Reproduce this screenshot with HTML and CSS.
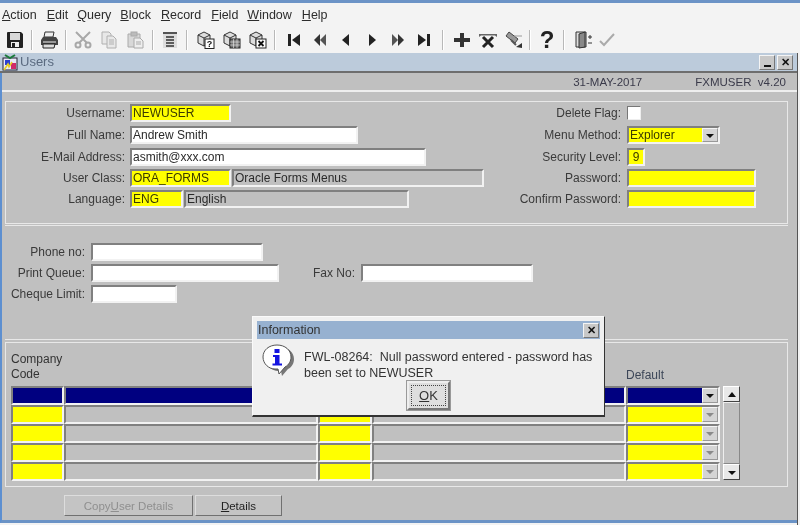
FILE: index.html
```html
<!DOCTYPE html>
<html lang="en">
<head>
<meta charset="utf-8">
<title>Users</title>
<link rel="stylesheet" href="styles.css">
</head>
<body>
<div class="app">
  <nav class="menubar">
    <span class="m m1"><u>A</u>ction</span><span class="m m2"><u>E</u>dit</span><span class="m m3"><u>Q</u>uery</span><span class="m m4"><u>B</u>lock</span><span class="m m5"><u>R</u>ecord</span><span class="m m6"><u>F</u>ield</span><span class="m m7"><u>W</u>indow</span><span class="m m8"><u>H</u>elp</span>
  </nav>
  <div class="toolbar">
    <span class="tb"><svg width="18" height="18" viewBox="0 0 18 18"><path d="M2 1h13l2 2v13a1 1 0 0 1-1 1H2a1 1 0 0 1-1-1V2a1 1 0 0 1 1-1z" fill="#222"/><rect x="4" y="2" width="10" height="7" fill="#d8d8d8"/><rect x="5" y="11" width="8" height="5" fill="#eee"/><rect x="6" y="12" width="3" height="4" fill="#222"/></svg></span>
    <i class="sep"></i>
    <span class="tb"><svg width="18" height="18" viewBox="0 0 18 18"><path d="M5 1h9l-1 5H4z" fill="#eee" stroke="#333"/><path d="M3 6h13l2 3v5H1V9z" fill="#444"/><rect x="3" y="10" width="13" height="2" fill="#999"/><path d="M3 13h12l-1 4H3z" fill="#ddd" stroke="#222"/></svg></span>
    <i class="sep"></i>
    <span class="tb"><svg width="18" height="18" viewBox="0 0 18 18" fill="none" stroke="#a8a8a8" stroke-width="2"><path d="M2 1l11 11M16 1L5 12"/><circle cx="4" cy="14" r="2.5"/><circle cx="14" cy="14" r="2.5"/></svg></span>
    <span class="tb"><svg width="18" height="18" viewBox="0 0 18 18" fill="#e8e8e8" stroke="#b0b0b0"><path d="M2 1h7l2 2v10H2z"/><path d="M7 5h6l3 3v9H7z"/><path d="M9 9h5M9 11h5M9 13h5" fill="none"/></svg></span>
    <span class="tb"><svg width="18" height="18" viewBox="0 0 18 18" fill="#d8d8d8" stroke="#aaa"><path d="M2 3h12v13H2z"/><rect x="5" y="1" width="6" height="4" fill="#bbb"/><path d="M8 7h6l3 3v7H8z" fill="#eee"/><path d="M10 11h5M10 13h5" fill="none"/></svg></span>
    <i class="sep s4"></i>
    <span class="tb"><svg width="18" height="18" viewBox="0 0 18 18"><rect x="2" y="1" width="14" height="16" fill="#ddd"/><rect x="2" y="1" width="14" height="2" fill="#555"/><path d="M5 6h8M5 9h8M5 12h8M5 15h8" stroke="#333" stroke-width="1.4"/></svg></span>
    <i class="sep"></i>
    <span class="tb g1"><svg width="18" height="18" viewBox="0 0 18 18"><path d="M1 4l6-3 6 3v8l-6 3-6-3z" fill="#ddd" stroke="#333"/><path d="M1 4l6 3 6-3M7 7v8" fill="none" stroke="#333"/><rect x="8" y="8" width="9" height="9.500" fill="#fff" stroke="#222"/><text x="12.500" y="16" class="gl">?</text></svg></span>
    <span class="tb"><svg width="18" height="18" viewBox="0 0 18 18"><path d="M1 4l6-3 6 3v8l-6 3-6-3z" fill="#ddd" stroke="#333"/><path d="M1 4l6 3 6-3M7 7v8" fill="none" stroke="#333"/><rect x="7" y="8" width="10" height="9" fill="#777" stroke="#222"/><path d="M7 11h10M7 14h10M10.500 8v9M14 8v9" stroke="#eee" stroke-width=".6"/></svg></span>
    <span class="tb"><svg width="18" height="18" viewBox="0 0 18 18"><path d="M1 4l6-3 6 3v8l-6 3-6-3z" fill="#ddd" stroke="#333"/><path d="M1 4l6 3 6-3M7 7v8" fill="none" stroke="#333"/><rect x="7" y="8" width="10" height="9" fill="#fff" stroke="#222"/><path d="M9.500 10l5 5M14.500 10l-5 5" stroke="#111" stroke-width="1.800"/></svg></span>
    <i class="sep"></i>
    <span class="tb g2"><svg width="14" height="14" viewBox="0 0 14 14" fill="#222"><rect x="1" y="1" width="3" height="12"/><path d="M13 1v12L5 7z"/></svg></span>
    <span class="tb"><svg width="14" height="14" viewBox="0 0 14 14" fill="#333"><path d="M7 1v12L1 7z"/><path d="M13 1v12L7 7z" fill="#555"/></svg></span>
    <span class="tb"><svg width="14" height="14" viewBox="0 0 14 14" fill="#222"><path d="M10 1v12L3 7z"/></svg></span>
    <span class="tb"><svg width="14" height="14" viewBox="0 0 14 14" fill="#222"><path d="M4 1v12l7-6z"/></svg></span>
    <span class="tb"><svg width="14" height="14" viewBox="0 0 14 14" fill="#333"><path d="M1 1v12l6-6z" fill="#555"/><path d="M7 1v12l6-6z"/></svg></span>
    <span class="tb"><svg width="14" height="14" viewBox="0 0 14 14" fill="#222"><path d="M1 1v12l8-6z"/><rect x="10" y="1" width="3" height="12"/></svg></span>
    <i class="sep s5"></i>
    <span class="tb"><svg width="18" height="18" viewBox="0 0 18 18" fill="#333"><path d="M7 2h4v5h6v4h-6v5H7v-5H1V7h6z"/></svg></span>
    <span class="tb"><svg width="18" height="18" viewBox="0 0 18 18"><path d="M0 3h18v3l-2-1.500H2L0 6z" fill="#666"/><path d="M4 6l10 10M14 6L4 16" stroke="#222" stroke-width="3"/></svg></span>
    <span class="tb"><svg width="18" height="18" viewBox="0 0 18 18"><path d="M4 1l9 7-3 4-9-7z" fill="#999" stroke="#444"/><path d="M6 9l5 5" stroke="#555" stroke-width="2"/><path d="M11 16l6-4v5z" fill="#333"/><path d="M9 5h8" stroke="#999"/></svg></span>
    <i class="sep s6"></i>
    <span class="tb help">?</span>
    <i class="sep"></i>
    <span class="tb g3"><svg width="18" height="18" viewBox="0 0 18 18"><path d="M1 1h10v15H1z" fill="#ddd" stroke="#333"/><path d="M4 3l6-2v15l-6 1z" fill="#888" stroke="#333"/><path d="M13 6h4M15 4v4M13 12h4" stroke="#333"/></svg></span>
    <span class="tb ok"><svg width="16" height="14" viewBox="0 0 16 14" fill="none" stroke="#aaa" stroke-width="2"><path d="M1 8l4 4 10-11"/></svg></span>
  </div>

  <div class="window">
    <header class="titlebar">
      <svg class="logo" width="17" height="17" viewBox="0 0 17 17"><rect x="1" y="4" width="14" height="12" fill="#e8e8f8" stroke="#223"/><path d="M3 1l5 3 5-3" fill="none" stroke="#1a7a3a" stroke-width="2"/><rect x="3" y="6" width="5" height="5" fill="#2a3fd0"/><rect x="9" y="9" width="5" height="6" fill="#d02a6a"/><path d="M2 16l4-6 1 3 3-5" stroke="#e8d020" fill="none" stroke-width="1.500"/></svg>
      <span class="title">Users</span>
      <span class="wbtn"><i class="minbar"></i></span>
      <span class="wbtn">✕</span>
    </header>
    <div class="content">
      <div class="infoband"><span class="date">31-MAY-2017</span><span class="ver">FXMUSER&nbsp; v4.20</span></div>
      <section class="panel p1">
        <div class="col left">
          <div class="row"><label>Username:</label><span class="f y w101">NEWUSER</span></div>
          <div class="row"><label>Full Name:</label><span class="f w w228">Andrew Smith</span></div>
          <div class="row"><label>E-Mail Address:</label><span class="f w w296">asmith@xxx.com</span></div>
          <div class="row"><label>User Class:</label><span class="f y w101">ORA_FORMS</span><span class="f g w252">Oracle Forms Menus</span></div>
          <div class="row"><label>Language:</label><span class="f y w53">ENG</span><span class="f g w225">English</span></div>
        </div>
        <div class="col right">
          <div class="row"><label>Delete Flag:</label><span class="check"></span></div>
          <div class="row"><label>Menu Method:</label><span class="f y w93 combo">Explorer<span class="drop"><i class="arr"></i></span></span></div>
          <div class="row"><label>Security Level:</label><span class="f y w18 num">9</span></div>
          <div class="row"><label>Password:</label><span class="f y w129"></span></div>
          <div class="row"><label>Confirm Password:</label><span class="f y w129"></span></div>
        </div>
      </section>
      <section class="panel p2">
        <div class="row"><label>Phone no:</label><span class="f w w172"></span></div>
        <div class="row"><label>Print Queue:</label><span class="f w w188"></span><label class="fax">Fax No:</label><span class="f w w172"></span></div>
        <div class="row"><label>Cheque Limit:</label><span class="f w w86"></span></div>
      </section>
      <section class="panel p3">
        <div class="tablewrap">
          <div class="grid">
            <div class="head c1">Company<br>Code</div>
            <div class="head c5">Default</div>
            <span class="f n"></span><span class="f n"></span><span class="f n"></span><span class="f n"></span><span class="f n combo"><span class="drop"><i class="arr"></i></span></span>
            <span class="f y"></span><span class="f g"></span><span class="f y"></span><span class="f g"></span><span class="f y combo"><span class="drop off"><i class="arr"></i></span></span>
            <span class="f y"></span><span class="f g"></span><span class="f y"></span><span class="f g"></span><span class="f y combo"><span class="drop off"><i class="arr"></i></span></span>
            <span class="f y"></span><span class="f g"></span><span class="f y"></span><span class="f g"></span><span class="f y combo"><span class="drop off"><i class="arr"></i></span></span>
            <span class="f y"></span><span class="f g"></span><span class="f y"></span><span class="f g"></span><span class="f y combo"><span class="drop off"><i class="arr"></i></span></span>
          </div>
          <div class="scroll">
            <span class="sbtn"><i class="arr up"></i></span>
            <span class="strack"></span>
            <span class="sbtn"><i class="arr"></i></span>
          </div>
        </div>
      </section>
      <div class="actions">
        <span class="btn dis b1">Copy <u>U</u>ser Details</span>
        <span class="btn b2"><u>D</u>etails</span>
      </div>
    </div>
  </div>

  <div class="dialog">
    <div class="dtitle"><span>Information</span><span class="wbtn dclose">✕</span></div>
    <div class="dbody">
      <svg class="infoicon" width="34" height="34" viewBox="0 0 34 34"><path d="M17 3C9 3 3 8 3 15s6 12 12 12h3l1 5 6-7c4-2 6-6 6-10C31 8 25 3 17 3z" fill="#777" transform="translate(2 1)"/><path d="M16 2C8 2 2 7 2 14s6 12 12 12h3l1 5 6-7c4-2 6-6 6-10C30 7 24 2 16 2z" fill="#fff" stroke="#555"/><rect x="13.500" y="6" width="5" height="4" fill="#1414e0"/><path d="M12 12h6.500v8.500H21v2H11.500v-2H14v-6.500h-2z" fill="#1414e0"/></svg>
      <p class="msg">FWL-08264:&nbsp; Null password entered - password has been set to NEWUSER</p>
    </div>
    <div class="dfoot"><span class="okbtn"><span class="okinner"><u>O</u>K</span></span></div>
  </div>
</div>
</body>
</html>
```
FILE: styles.css
```css
* { box-sizing: border-box; }
html, body { margin: 0; padding: 0; }
body { width: 800px; height: 525px; overflow: hidden; background: #f1f1f1; }
.app {
  position: relative; width: 800px; height: 525px; overflow: hidden;
  font: 12px/16px "Liberation Sans", Arial, sans-serif; color: #333;
  background: #f3f3f3; border-top: 3px solid #6b93c6; filter: blur(.35px);
}
u { text-underline-offset: 1px; }

.menubar { height: 24px; display: flex; align-items: center; padding-left: 2px; font-size: 12.500px; color: #2c2c2c; }
.m2 { margin-left: 10px; } .m3 { margin-left: 9px; } .m4 { margin-left: 9px; }
.m5 { margin-left: 10px; } .m6 { margin-left: 10px; } .m7 { margin-left: 9px; } .m8 { margin-left: 10px; }
.m1 { margin-right: 0; }

.toolbar { height: 26px; display: flex; align-items: center; padding-left: 2px; }
.tb { width: 26px; height: 24px; display: flex; align-items: center; justify-content: center; flex: none; }
.sep { width: 2px; height: 20px; margin: 0 3px; background: #b8b8b8; border-right: 1px solid #fff; flex: none; }
.s4 { margin: 0 3px 0 4px; } .s5 { margin: 0 5px; } .s6 { margin: 0 3px 0 2px; }
.g1 { margin-left: 2px; } .g2 { margin-left: 2px; } .g3 { margin-left: 3px; }
.tb.ok { margin-left: -3px; }
.help { font: bold 24px/24px "Liberation Sans", sans-serif; color: #222; }
.gl { font: bold 9px "Liberation Sans", sans-serif; text-anchor: middle; fill: #111; }

.window { width: 798px; height: 472px; border-right: 1px solid #555; }
.titlebar { height: 20px; display: flex; align-items: center; background: #bccbdb; border-bottom: 2px solid #6e6e6e; padding: 0 4px 0 2px; }
.logo { flex: none; margin-top: 1px; }
.title { flex: 1; margin-left: 1px; font-size: 13px; color: #5b6b80; }
.wbtn {
  width: 16px; height: 15px; margin-left: 2px; display: flex; align-items: center; justify-content: center;
  background: #c8c8c8; border: 1px solid; border-color: #f4f4f4 #777 #777 #f4f4f4; font-size: 11px; line-height: 11px; color: #111; font-weight: bold;
}
.minbar { width: 7px; height: 2px; background: #111; margin-top: 8px; }

.content { height: 450px; background: #c0c0c0; border-left: 2px solid #5d8fd0; border-bottom: 3px solid #6b93c6; margin-right: 0; padding: 0 9px 0 3px; position: relative; }
.infoband { height: 19px; margin: 0 -9px 0 -3px; display: flex; justify-content: flex-end; align-items: center; border-bottom: 2px solid #eee; padding-right: 11px; font-size: 11.500px; color: #3a3a4a; }
.date { margin-right: 53px; }

.panel { margin-top: 9px; border: 1px solid #e8e8e8; outline: 0; }
.p1 { height: 123px; display: flex; padding-top: 2px; }
.p2 { height: 115px; margin-top: 1px; padding-top: 17px; border-left: 0; border-right: 0; display: flex; flex-direction: column; }
.p3 { height: 145px; margin-top: 2px; padding: 10px 0 0 5px; }

.row { display: flex; align-items: center; height: 18px; }
.row label { flex: none; text-align: right; color: #3a3a3a; white-space: nowrap; }
.col { display: grid; grid-template-rows: 22px 22px 21px 21px 18px; }
.col .row { align-self: start; }
.left { width: 494px; }
.left label { width: 119px; margin-right: 5px; }
.right label { width: 121px; margin-right: 6px; }

.f { display: block; height: 18px; flex: none; border: 2px solid; border-color: #808080 #f2f2f2 #f2f2f2 #808080; padding-left: 1px; line-height: 14px; white-space: nowrap; color: #2a2a2a; }
.y { background: #ffff00; color: #3a3a00; }
.w { background: #fff; }
.g { background: #c0c0c0; }
.n { background: #000080; }
.w101 { width: 101px; } .w228 { width: 228px; } .w296 { width: 296px; } .w252 { width: 252px; margin-left: 1px; }
.w53 { width: 53px; } .w225 { width: 225px; margin-left: 1px; } .w93 { width: 93px; } .w18 { width: 18px; }
.w129 { width: 129px; } .w172 { width: 172px; } .w188 { width: 188px; } .w86 { width: 86px; }
.num { text-align: center; padding: 0; }

.check { width: 14px; height: 14px; background: #fff; border: 1px solid; border-color: #777 #eee #eee #777; }
.combo { position: relative; }
.drop { position: absolute; right: 0; top: 0; bottom: 0; width: 16px; background: #d4d4d4; border: 1px solid; border-color: #f4f4f4 #999 #999 #f4f4f4; display: flex; align-items: center; justify-content: center; }
.arr { width: 0; height: 0; border-left: 4px solid transparent; border-right: 4px solid transparent; border-top: 4px solid #111; display: block; margin-top: 1px; }
.arr.up { border-top: 0; border-bottom: 5px solid #111; }
.drop.off .arr { border-top-color: #8a8a8a; }

.p2 .row { margin-bottom: 3px; }
.p2 .row:nth-child(2) { margin-bottom: 3px; height: 18px; }
.p2 label { width: 80px; margin-right: 6px; }
.p2 label.fax { width: 76px; }

.tablewrap { display: flex; }
.grid { display: grid; grid-template-columns: 53px 254px 54px 254px 94px; grid-template-rows: 15px 18px 18px 18px 18px 18px; row-gap: 1px; width: 712px; column-gap: 0; grid-auto-rows: 18px; }
.grid .f { height: 19px; }
.head { line-height: 15px; color: #333; white-space: nowrap; }
.c1 { grid-column: 1 / 5; grid-row: 1; margin-top: -1px; height: 15px; }
.c5 { grid-column: 5; grid-row: 1; padding-top: 15px; height: 30px; color: #3c4658; }
.grid { padding-top: 0; grid-template-rows: 32px repeat(5, 18px); }

.scroll { width: 17px; margin-left: 0; margin-top: 33px; display: flex; flex-direction: column; height: 94px; }
.sbtn { height: 16px; flex: none; background: #e8e8e8; border: 1px solid; border-color: #fff #444 #444 #fff; display: flex; align-items: center; justify-content: center; }
.strack { flex: 1; background: #c0c0c0; border: 1px solid; border-color: #eee #888 #888 #eee; }

.actions { display: flex; gap: 2px; margin: 8px 0 0 59px; }
.btn { height: 21px; display: flex; align-items: center; justify-content: center; background: #c4c4c4; border: 1px solid; border-color: #ddd #707070 #707070 #ddd; font-size: 11.500px; }
.b1 { width: 129px; } .b2 { width: 87px; color: #222; }
.dis { color: #8f8f8f; }

.dialog { position: absolute; left: 252px; top: 313px; width: 353px; height: 101px; padding: 4px 4px 0; background: #f0f0f0; border: 1px solid #fafafa; border-right: 1px solid #333; border-bottom: 2px solid #333; }
.dtitle { height: 18px; display: flex; align-items: center; justify-content: space-between; background: #97b1d0; padding: 0 1px 0 1px; color: #333; font-size: 12.500px; }
.dclose { width: 16px; height: 15px; margin: 0; }
.dbody { display: flex; height: 39px; padding: 4px 0 0 4px; }
.infoicon { flex: none; margin-right: 9px; }
.msg { margin: 6px 0 0; width: 294px; font-size: 12.500px; line-height: 16px; color: #333; }
.dfoot { display: flex; justify-content: center; margin-top: 3px; }
.okbtn { width: 43px; height: 29px; background: #dedede; border: 2px solid; border-color: #eee #777 #777 #eee; outline: 1px solid #999; padding: 2px; display: flex; }
.okinner { flex: 1; border: 1px dotted #444; display: flex; align-items: center; justify-content: center; font-size: 13px; }
```
